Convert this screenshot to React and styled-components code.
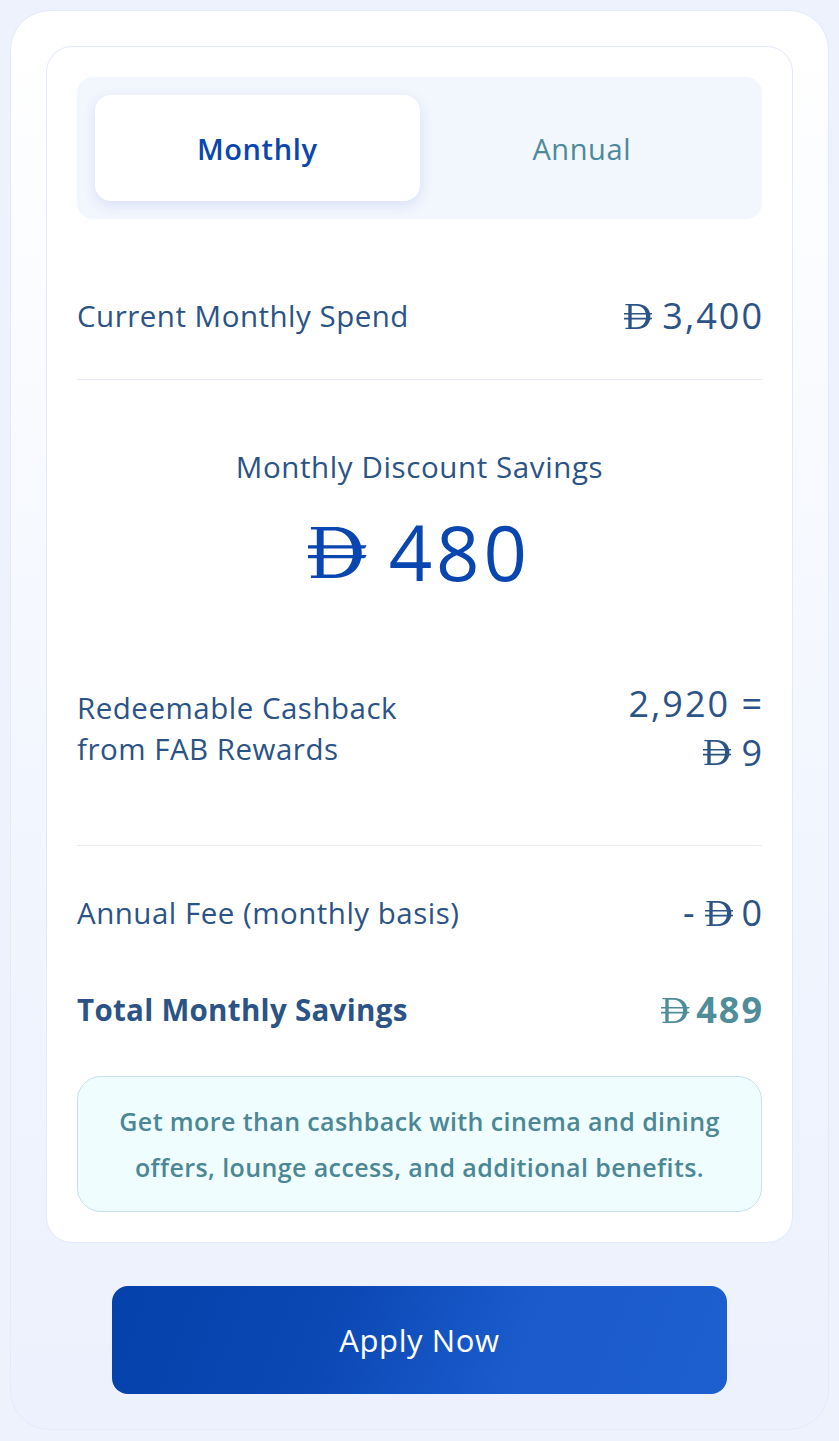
import React, { useState } from "react";
import styled, { createGlobalStyle } from "styled-components";

const Global = createGlobalStyle`
  html, body { margin: 0; padding: 0; background: #edf2fd; }
  body { font-family: "Open Sans", "Noto Sans", sans-serif; -webkit-font-smoothing: antialiased; }
  * { box-sizing: border-box; }
`;

const Page = styled.div`
  padding: 10px;
  min-height: 1441px;
`;

const OuterCard = styled.div`
  width: 819px;
  height: 1420px;
  border-radius: 40px;
  border: 1px solid #e3eafb;
  background: linear-gradient(180deg, #ffffff 0%, #f1f5fe 60%, #ecf1fd 100%);
  padding: 35px 35px 0;
  display: flex;
  flex-direction: column;
  align-items: center;
`;

const InnerCard = styled.div`
  width: 747px;
  background: #ffffff;
  border: 1px solid #e2e9fa;
  border-radius: 26px;
  padding: 30px 30px 30px;
  display: flex;
  flex-direction: column;
`;

const Toggle = styled.div`
  height: 142px;
  background: #f2f6fd;
  border-radius: 16px;
  padding: 18px;
  display: grid;
  grid-template-columns: 1fr 1fr;
`;

const Tab = styled.button`
  border: none;
  border-radius: 16px;
  font-family: inherit;
  font-size: 29px;
  letter-spacing: 0.6px;
  cursor: pointer;
  background: ${(p) => (p.$active ? "#ffffff" : "transparent")};
  color: ${(p) => (p.$active ? "#0a46b0" : "#4a8a9b")};
  font-weight: ${(p) => (p.$active ? 600 : 400)};
  box-shadow: ${(p) =>
    p.$active ? "0 4px 14px rgba(40, 80, 190, 0.13)" : "none"};
`;

const Row = styled.div`
  display: flex;
  justify-content: space-between;
  align-items: center;
  margin-top: ${(p) => p.$mt || 0}px;
  padding-bottom: ${(p) => p.$pb || 0}px;
  border-bottom: ${(p) => (p.$divider ? "1px solid #e6ebf3" : "none")};
`;

const Label = styled.div`
  font-size: 29.5px;
  letter-spacing: ${(p) => (p.$bold ? 0.3 : 0.5)}px;
  line-height: ${(p) => p.$lh || 40}px;
  color: #2b5386;
  font-weight: ${(p) => (p.$bold ? 700 : 400)};
`;

const Value = styled.div`
  font-size: 36px;
  letter-spacing: 2px;
  line-height: ${(p) => p.$lh || 40}px;
  color: ${(p) => p.$color || "#2b5386"};
  font-weight: ${(p) => (p.$bold ? 700 : 400)};
  text-align: right;
  display: flex;
  flex-direction: column;
  align-items: flex-end;
  margin-right: -2px;
`;

const ValueLine = styled.span`
  display: inline-flex;
  align-items: center;
  gap: ${(p) => p.$gap ?? 10}px;
`;

const Center = styled.div`
  display: flex;
  flex-direction: column;
  align-items: center;
  margin-top: ${(p) => p.$mt || 0}px;
`;

const SavingsLabel = styled.div`
  font-size: 29.5px;
  letter-spacing: 0.6px;
  line-height: 36px;
  color: #2b5386;
`;

const BigAmount = styled.div`
  margin-top: 27px;
  font-size: 76px;
  letter-spacing: 4px;
  line-height: 80px;
  color: #0a46b0;
  display: flex;
  align-items: center;
  gap: 22px;
`;

const Note = styled.div`
  margin-top: 46px;
  background: #effdfe;
  border: 1px solid #c6e2e9;
  border-radius: 24px;
  padding: 21px 10px;
  text-align: center;
  color: #4b8795;
  font-size: 25px;
  letter-spacing: 0.4px;
  line-height: 46px;
  font-weight: 600;
`;

const ApplyButton = styled.button`
  margin-top: 43px;
  width: 615px;
  height: 108px;
  border: none;
  border-radius: 16px;
  background: linear-gradient(110deg, #0541aa 0%, #0b48b4 35%, #1a5acb 65%, #1e5fcf 100%);
  color: #ffffff;
  font-family: inherit;
  font-size: 31px;
  letter-spacing: 0.6px;
  cursor: pointer;
`;

const Dirham = ({ size = 24, color = "currentColor" }) => (
  <svg
    width={size * 1.15}
    height={size}
    viewBox="0 0 60 52"
    fill={color}
    aria-hidden="true"
  >
    <path
      fillRule="evenodd"
      d="M3 0 H27 C45 0 55 11 55 26 C55 41 45 52 27 52 H3 V49.5 H9 V2.5 H3 Z M16 3.5 V48.5 H26 C38 48.5 46 39.5 46 26 C46 12.5 38 3.5 26 3.5 Z"
    />
    <path d="M0 18.5 H60 C59 21 58 22 56 22 H0 Z" />
    <path d="M0 28.5 H60 C59 31 58 32 56 32 H0 Z" />
  </svg>
);

export default function App() {
  const [mode, setMode] = useState("monthly");
  return (
    <Page>
      <Global />
      <OuterCard>
        <InnerCard>
          <Toggle>
            <Tab $active={mode === "monthly"} onClick={() => setMode("monthly")}>
              Monthly
            </Tab>
            <Tab $active={mode === "annual"} onClick={() => setMode("annual")}>
              Annual
            </Tab>
          </Toggle>

          <Row $mt={77} $pb={43} $divider>
            <Label>Current Monthly Spend</Label>
            <Value>
              <ValueLine>
                <Dirham size={25} /> 3,400
              </ValueLine>
            </Value>
          </Row>

          <Center $mt={69}>
            <SavingsLabel>Monthly Discount Savings</SavingsLabel>
            <BigAmount>
              <Dirham size={51} /> 480
            </BigAmount>
          </Center>

          <Row $mt={87} $pb={68} $divider>
            <Label $lh={41}>
              Redeemable Cashback
              <br />
              from FAB Rewards
            </Label>
            <Value $lh={49}>
              <ValueLine>2,920 =</ValueLine>
              <ValueLine>
                <Dirham size={25} /> 9
              </ValueLine>
            </Value>
          </Row>

          <Row $mt={47}>
            <Label>Annual Fee (monthly basis)</Label>
            <Value>
              <ValueLine $gap={8}>
                - <Dirham size={25} />0
              </ValueLine>
            </Value>
          </Row>

          <Row $mt={57}>
            <Label $bold>Total Monthly Savings</Label>
            <Value $bold $color="#4f8d99">
              <ValueLine $gap={6}>
                <Dirham size={25} />489
              </ValueLine>
            </Value>
          </Row>

          <Note>
            Get more than cashback with cinema and dining
            <br />
            offers, lounge access, and additional benefits.
          </Note>
        </InnerCard>
        <ApplyButton>Apply Now</ApplyButton>
      </OuterCard>
    </Page>
  );
}
